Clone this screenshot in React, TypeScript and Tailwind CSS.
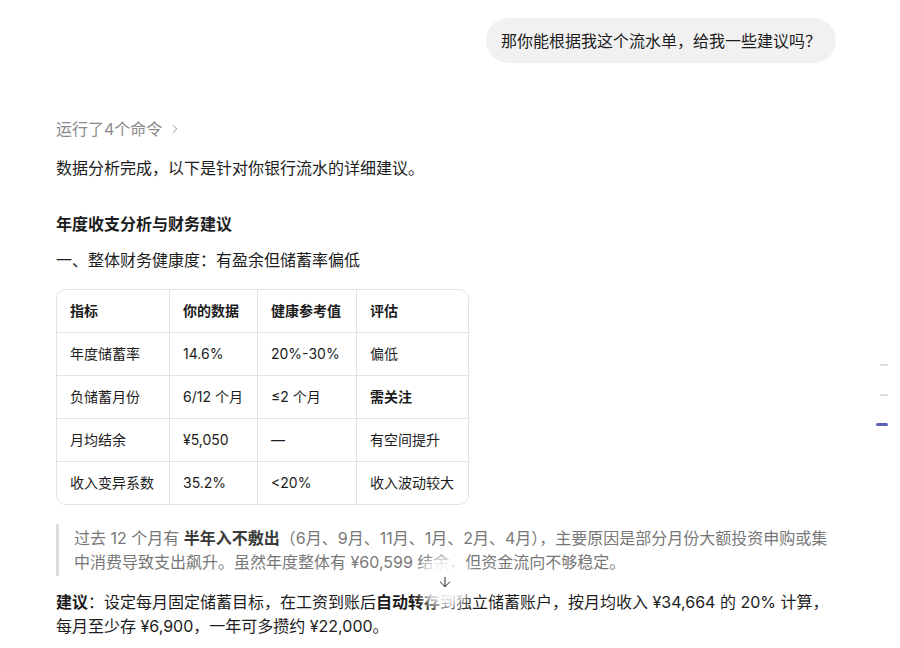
import React from 'react';
import { ArrowDown, ChevronRight } from 'lucide-react';

const rows = [
  ['指标', '你的数据', '健康参考值', '评估'],
  ['年度储蓄率', '14.6%', '20%-30%', '偏低'],
  ['负储蓄月份', '6/12 个月', '≤2 个月', '需关注'],
  ['月均结余', '¥5,050', '—', '有空间提升'],
  ['收入变异系数', '35.2%', '<20%', '收入波动较大'],
];

// bold cells besides the header row
const strongCells = new Set(['需关注']);

const App = () => {
  return (
    <div
      className="relative w-[900px] h-[648px] overflow-hidden bg-white text-[#1c1c1c]"
      style={{ fontFamily: 'Inter, "Noto Sans CJK SC", sans-serif' }}
    >
      {/* user message */}
      <div className="flex justify-end pt-[18px] pr-[64px]">
        <div className="rounded-full bg-[#f1f1f1] px-[15px] py-[10.5px] text-[16px] leading-6">
          那你能根据我这个流水单，给我一些建议吗？
        </div>
      </div>

      {/* assistant reply */}
      <div className="ml-[56px] w-[780px] text-[16px] leading-6">
        <div className="mt-[54px] flex items-center gap-[6px] text-[#8a8a8a]">
          <span>运行了4个命令</span>
          <ChevronRight size={14} strokeWidth={1.6} />
        </div>

        <p className="mt-[15px]">数据分析完成，以下是针对你银行流水的详细建议。</p>

        <h3 className="mt-[32px] text-[16px] font-bold">年度收支分析与财务建议</h3>

        <p className="mt-[12px]">一、整体财务健康度：有盈余但储蓄率偏低</p>

        <div className="mt-[17px] w-[413px] overflow-hidden rounded-[10px] border border-[#e3e3e3]">
          <div className="grid grid-cols-[112px_87px_98px_111px] gap-px bg-[#e3e3e3]">
            {rows.map((row, ri) =>
              row.map((cell, ci) => (
                <div
                  key={`${ri}-${ci}`}
                  className={`flex h-[42px] items-center whitespace-nowrap bg-white px-[13px] text-[14px] ${
                    ri === 0 || strongCells.has(cell) ? 'font-semibold' : ''
                  }`}
                >
                  {cell}
                </div>
              ))
            )}
          </div>
        </div>

        <blockquote className="mt-[19px] border-l-[3px] border-[#dedede] py-[2px] pl-[15px] text-[#777777]">
          过去 12 个月有 <strong className="font-semibold text-[#3a3a3a]">半年入不敷出</strong>
          （6月、9月、11月、1月、2月、4月），主要原因是部分月份大额投资申购或集中消费导致支出飙升。虽然年度整体有 ¥60,599 结余，但资金流向不够稳定。
        </blockquote>

        <p className="mt-[14px]">
          <strong className="font-semibold">建议</strong>：设定每月固定储蓄目标，在工资到账后
          <strong className="font-semibold">自动转存</strong>到独立储蓄账户，按月均收入 ¥34,664 的 20% 计算，每月至少存 ¥6,900，一年可多攒约 ¥22,000。
        </p>
      </div>

      {/* scroll to bottom */}
      <div className="absolute left-[427px] top-[564px] flex h-[36px] w-[36px] items-center justify-center rounded-full bg-white/90 shadow-[0_0_12px_8px_rgba(255,255,255,0.95)]">
        <ArrowDown size={16} strokeWidth={1.5} className="text-[#222]" />
      </div>

      {/* outline markers */}
      <div className="absolute right-[12px] top-[364px] flex flex-col items-end">
        <div className="h-[2px] w-[8px] rounded bg-[#dcdcdc]" />
        <div className="mt-[28px] h-[2px] w-[8px] rounded bg-[#dcdcdc]" />
        <div className="mt-[27px] h-[3px] w-[12px] rounded bg-[#5c62b8]" />
      </div>
    </div>
  );
};

export default App;
